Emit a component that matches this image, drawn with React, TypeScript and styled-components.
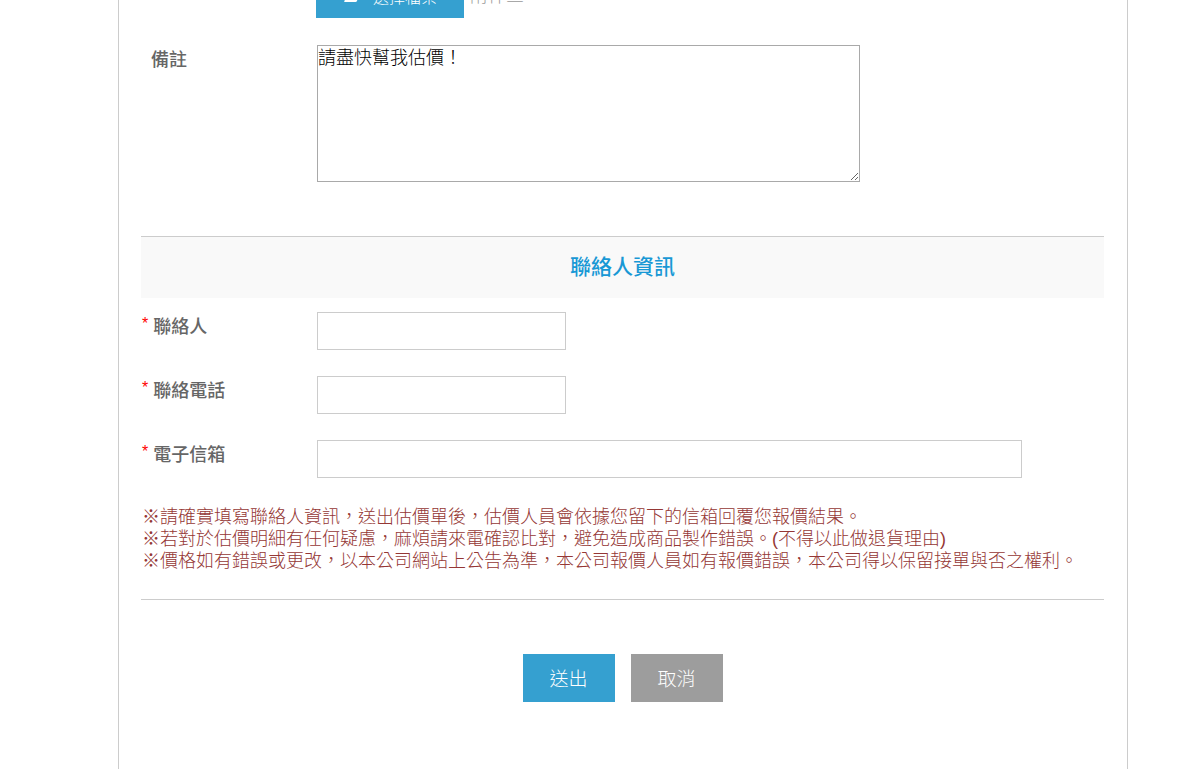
import React from 'react';
import styled, { createGlobalStyle } from 'styled-components';

const GlobalStyle = createGlobalStyle`
  * { box-sizing: border-box; }
  html { overflow: hidden; }
  body {
    margin: 0;
    background: #fff;
    color: #666;
    font-family: "Liberation Sans", "Noto Sans CJK TC", sans-serif;
    font-size: 18px;
    font-weight: 300;
  }
`;

const Panel = styled.main`
  min-height: 100vh;
  margin: 0 53px 0 118px;
  padding: 0 23px 0 22px;
  border: solid #ccc;
  border-width: 0 1px;
`;

const Form = styled.form`
  display: flex;
  flex-direction: column;
`;

const UploadRow = styled.div`
  display: flex;
  align-items: flex-end;
  gap: 6px;
  height: 18px;
  padding-left: 175px;
  overflow: hidden;
`;

const UploadButton = styled.button`
  display: flex;
  flex: none;
  align-items: center;
  justify-content: center;
  gap: 14px;
  width: 148px;
  height: 48px;
  padding: 4px 0 0;
  border: 0;
  background: #35a0d0;
  color: #fff;
  font: inherit;
  font-size: 16px;
`;

const UploadName = styled.span`
  padding-bottom: 11px;
  color: #999;
  line-height: 22px;
`;

const Row = styled.div`
  display: grid;
  grid-template-columns: 176px minmax(0, 1fr);
  align-items: start;
`;

const NoteRow = styled(Row)`
  margin-top: 27px;
`;

const Label = styled.label<{ $indent?: boolean }>`
  display: flex;
  gap: 5px;
  padding: ${p => (p.$indent ? '0 0 0 10px' : '0 0 0 1px')};
  font-weight: 500;
  line-height: 30px;
`;

const Star = styled.span`
  color: #f00;
  font-size: 16px;
  font-weight: 400;
  line-height: 24px;
`;

const TextArea = styled.textarea`
  display: block;
  width: 543px;
  max-width: 100%;
  height: 137px;
  padding: 0;
  border: 1px solid #a9a9a9;
  border-radius: 0;
  outline: 0;
  color: #000;
  font: inherit;
  line-height: 24px;
`;

const Input = styled.input<{ $wide?: boolean }>`
  width: ${p => (p.$wide ? '705px' : '249px')};
  max-width: 100%;
  height: 38px;
  padding: 0 8px;
  border: 1px solid #ccc;
  border-radius: 0;
  outline: 0;
  font: inherit;
`;

const Heading = styled.h2`
  margin: 54px 0 0;
  padding-bottom: 2px;
  border-top: 1px solid #ccc;
  background: #f9f9f9;
  color: #1898d5;
  font-size: 21px;
  font-weight: 500;
  line-height: 59px;
  text-align: center;
`;

const Fields = styled.div`
  display: flex;
  flex-direction: column;
  gap: 26px;
  padding: 14px 0 28px;
`;

const Notice = styled.div`
  padding: 0 0 27px 1px;
  border-bottom: 1px solid #ccc;
  color: #953735;
  line-height: 22px;
`;

const NoticeLine = styled.p`
  margin: 0;
`;

const Actions = styled.div`
  display: flex;
  justify-content: center;
  gap: 16px;
  padding: 54px 0 60px;
`;

const ActionButton = styled.button<{ $muted?: boolean }>`
  width: 92px;
  height: 48px;
  padding: 0 0 2px;
  border: 0;
  background: ${p => (p.$muted ? '#9d9d9d' : '#35a0d0')};
  color: #fff;
  font: inherit;
  font-size: 19px;
`;

const contacts = [
  { id: 'name', label: '聯絡人', type: 'text', wide: false },
  { id: 'phone', label: '聯絡電話', type: 'tel', wide: false },
  { id: 'email', label: '電子信箱', type: 'email', wide: true },
];

const notices = [
  '※請確實填寫聯絡人資訊，送出估價單後，估價人員會依據您留下的信箱回覆您報價結果。',
  '※若對於估價明細有任何疑慮，麻煩請來電確認比對，避免造成商品製作錯誤。(不得以此做退貨理由)',
  '※價格如有錯誤或更改，以本公司網站上公告為準，本公司報價人員如有報價錯誤，本公司得以保留接單與否之權利。',
];

export default function App() {
  return (
    <>
      <GlobalStyle />
      <Panel lang="zh-Hant">
        <Form onSubmit={e => e.preventDefault()}>
          <UploadRow>
            <UploadButton type="button">
              <svg width="16" height="16" viewBox="0 0 16 16" fill="#fff" aria-hidden="true">
                <path d="M0 2h5l2 2h6v2H4L1 12H0zM5 7h11l-2 6q-.5 1-1.500 1H2q-1 0-.7-1z" />
              </svg>
              選擇檔案
            </UploadButton>
            <UploadName>附件三</UploadName>
          </UploadRow>
          <NoteRow>
            <Label htmlFor="note" $indent>備註</Label>
            <TextArea id="note" defaultValue="請盡快幫我估價！" />
          </NoteRow>
          <Heading>聯絡人資訊</Heading>
          <Fields>
            {contacts.map(c => (
              <Row key={c.id}>
                <Label htmlFor={c.id}>
                  <Star>*</Star>
                  {c.label}
                </Label>
                <Input id={c.id} type={c.type} $wide={c.wide} />
              </Row>
            ))}
          </Fields>
          <Notice>
            {notices.map(text => (
              <NoticeLine key={text}>{text}</NoticeLine>
            ))}
          </Notice>
          <Actions>
            <ActionButton type="submit">送出</ActionButton>
            <ActionButton type="button" $muted>取消</ActionButton>
          </Actions>
        </Form>
      </Panel>
    </>
  );
}
